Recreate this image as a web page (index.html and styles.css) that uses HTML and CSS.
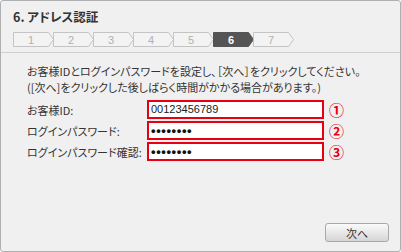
FILE: index.html
```html
<!DOCTYPE html>
<html>
<head>
<meta charset="utf-8">
<title>アドレス認証</title>
<link rel="stylesheet" href="styles.css">
</head>
<body>
    <div class="dialog">
        <div class="head">
            <h1 class="title">6. アドレス認証</h1>
            <div class="steps">
                <svg class="step" width="41" height="15"><polygon points="0.5,0.5 35.5,0.5 40.5,7.5 35.5,14.5 0.5,14.5"/><text x="18" y="11.5">1</text></svg>
                <svg class="step" width="41" height="15"><polygon points="0.5,0.5 35.5,0.5 40.5,7.5 35.5,14.5 0.5,14.5"/><text x="18" y="11.5">2</text></svg>
                <svg class="step" width="41" height="15"><polygon points="0.5,0.5 35.5,0.5 40.5,7.5 35.5,14.5 0.5,14.5"/><text x="18" y="11.5">3</text></svg>
                <svg class="step" width="41" height="15"><polygon points="0.5,0.5 35.5,0.5 40.5,7.5 35.5,14.5 0.5,14.5"/><text x="18" y="11.5">4</text></svg>
                <svg class="step" width="41" height="15"><polygon points="0.5,0.5 35.5,0.5 40.5,7.5 35.5,14.5 0.5,14.5"/><text x="18" y="11.5">5</text></svg>
                <svg class="step active" width="41" height="15"><polygon points="0.5,0.5 35.5,0.5 40.5,7.5 35.5,14.5 0.5,14.5"/><text x="18" y="11.5">6</text></svg>
                <svg class="step" width="41" height="15"><polygon points="0.5,0.5 35.5,0.5 40.5,7.5 35.5,14.5 0.5,14.5"/><text x="18" y="11.5">7</text></svg>
            </div>
        </div>

        <div class="content">
            <p class="lead">お客様IDとログインパスワードを設定し、［次へ］をクリックしてください。</p>
            <p class="lead">([次へ]をクリックした後しばらく時間がかかる場合があります。)</p>
            <div class="form">
                <div class="row">
                    <span class="label">お客様ID:</span>
                    <span class="field">00123456789</span>
                    <span class="mark">①</span>
                </div>
                <div class="row">
                    <span class="label">ログインパスワード:</span>
                    <span class="field dots">••••••••</span>
                    <span class="mark">②</span>
                </div>
                <div class="row">
                    <span class="label">ログインパスワード確認:</span>
                    <span class="field dots">••••••••</span>
                    <span class="mark">③</span>
                </div>
            </div>
        </div>

        <div class="foot">
            <button class="next-button">次へ</button>
        </div>
    </div>
</body>
</html>
```

FILE: styles.css
```css
body
{
margin: 0;
padding: 0;
background-color: white;
font-family: "Noto Sans CJK JP", "Liberation Sans", sans-serif;
}
.dialog {
            box-sizing: border-box;
            width: 401px;
            height: 252px;
            background-color: #f0f0f0;
            border: 1px solid #b0b0b0;
            border-radius: 3px;
            display: flex;
            flex-direction: column;
        }
        .head {
            padding: 8px 12px 5px 12px;
            border-bottom: 1px solid #cfcfcf;
        }
        .title {
            margin: 0;
            font-size: 12.5px;
            line-height: 15px;
            font-weight: bold;
            color: #333;
            font-feature-settings: "palt";
        }
        .steps {
            display: flex;
            margin-top: 8px;
            height: 15px;
        }
        .step {
            display: block;
            margin-right: -1px;
        }
        .step polygon {
            fill: #f3f3f3;
            stroke: #c4c4c4;
        }
        .step text {
            font-family: "Liberation Sans", sans-serif;
            font-size: 11px;
            fill: #b0b0b0;
            text-anchor: middle;
        }
        .step.active polygon {
            fill: #555;
            stroke: #555;
        }
        .step.active text {
            fill: white;
            font-weight: bold;
        }
        .content {
            flex: 1;
            padding: 10px 0 0 26px;
            color: #333;
            font-size: 11px;
            font-feature-settings: "palt";
        }
        .lead {
            margin: 0;
            line-height: 16px;
        }
        .form {
            margin-top: 5px;
            display: flex;
            flex-direction: column;
            gap: 2px;
        }
        .row {
            display: flex;
            align-items: center;
            height: 19px;
        }
        .label {
            width: 120px;
        }
        .field {
            box-sizing: border-box;
            width: 177px;
            height: 19px;
            border: 2px solid #e50012;
            background-color: white;
            padding-left: 2px;
            font-family: "Liberation Sans", sans-serif;
            font-size: 11px;
            line-height: 15px;
            color: #222;
        }
        .dots {
            font-size: 13px;
            font-weight: bold;
            letter-spacing: 0.6px;
            color: #111;
        }
        .mark {
            margin-left: 5px;
            color: #e50012;
            font-size: 15px;
            font-weight: bold;
        }
        .foot {
            display: flex;
            justify-content: flex-end;
            padding: 0 11px 9px 0;
        }
        .next-button {
            box-sizing: border-box;
            width: 64px;
            height: 19px;
            padding: 0;
            font-family: "Noto Sans CJK JP", sans-serif;
            font-size: 11px;
            color: #333;
            background: linear-gradient(#fafafa, #d6d6d6);
            border: 1px solid #a8a8a8;
            border-radius: 3px;
        }
```
